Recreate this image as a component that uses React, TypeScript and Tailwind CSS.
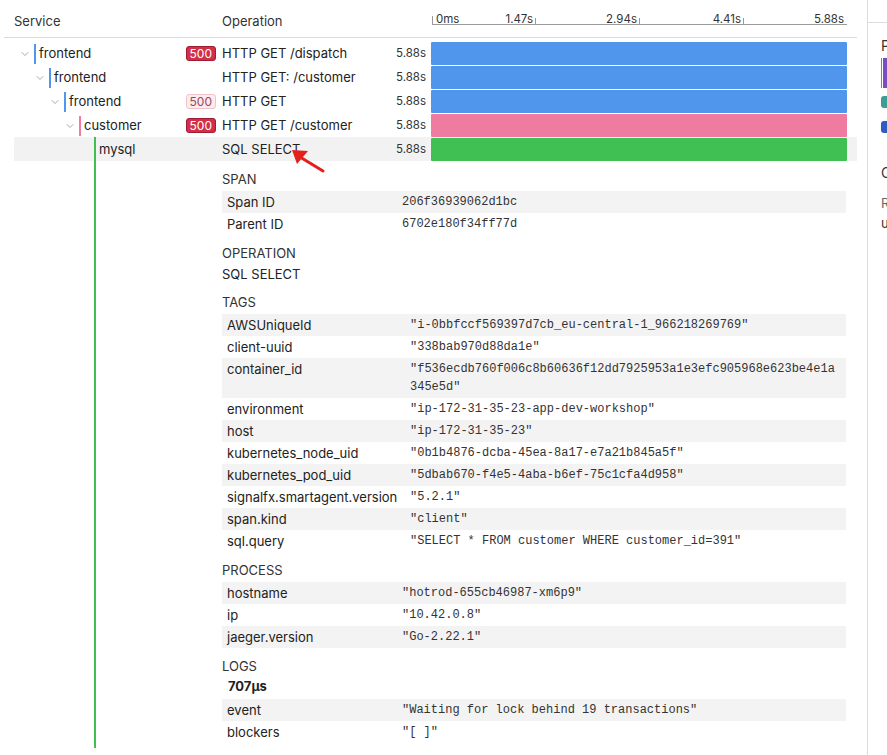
import { ChevronDown } from 'lucide-react';

type Span = {
  depth: number;
  service: string;
  color: string;
  op: string;
  badge?: 'solid' | 'light';
  open?: boolean;
};

const spans: Span[] = [
  { depth: 0, service: 'frontend', color: 'bg-[#4f96ec]', op: 'HTTP GET /dispatch', badge: 'solid', open: true },
  { depth: 1, service: 'frontend', color: 'bg-[#4f96ec]', op: 'HTTP GET: /customer', open: true },
  { depth: 2, service: 'frontend', color: 'bg-[#4f96ec]', op: 'HTTP GET', badge: 'light', open: true },
  { depth: 3, service: 'customer', color: 'bg-[#ef7ca0]', op: 'HTTP GET /customer', badge: 'solid', open: true },
  { depth: 4, service: 'mysql', color: 'bg-[#40bf52]', op: 'SQL SELECT' },
];

const pads = ['pl-[5px]', 'pl-[20px]', 'pl-[35px]', 'pl-[50px]', 'pl-[65px]'];

const ticks = [
  { label: '1.47s', x: 104 },
  { label: '2.94s', x: 208 },
  { label: '4.41s', x: 312 },
];

const spanInfo = [
  ['Span ID', '206f36939062d1bc'],
  ['Parent ID', '6702e180f34ff77d'],
];

const tags = [
  ['AWSUniqueId', '"i-0bbfccf569397d7cb_eu-central-1_966218269769"'],
  ['client-uuid', '"338bab970d88da1e"'],
  ['container_id', '"f536ecdb760f006c8b60636f12dd7925953a1e3efc905968e623be4e1a345e5d"'],
  ['environment', '"ip-172-31-35-23-app-dev-workshop"'],
  ['host', '"ip-172-31-35-23"'],
  ['kubernetes_node_uid', '"0b1b4876-dcba-45ea-8a17-e7a21b845a5f"'],
  ['kubernetes_pod_uid', '"5dbab670-f4e5-4aba-b6ef-75c1cfa4d958"'],
  ['signalfx.smartagent.version', '"5.2.1"'],
  ['span.kind', '"client"'],
  ['sql.query', '"SELECT * FROM customer WHERE customer_id=391"'],
];

const process = [
  ['hostname', '"hotrod-655cb46987-xm6p9"'],
  ['ip', '"10.42.0.8"'],
  ['jaeger.version', '"Go-2.22.1"'],
];

const logs = [
  ['event', '"Waiting for lock behind 19 transactions"'],
  ['blockers', '"[ ]"'],
];

function KeyValues({ rows, wide }: { rows: string[][]; wide?: boolean }) {
  return (
    <div className="mt-[2px]">
      {rows.map(([k, v], i) => (
        <div key={k} className={`flex ${i % 2 === 0 ? 'bg-[#f3f3f3]' : ''}`}>
          <div className={`${wide ? 'w-[188px]' : 'w-[180px]'} shrink-0 pl-[5px] py-[2px] leading-[18px] text-[13px] text-[#222]`}>
            {k}
          </div>
          <div className="flex-1 pr-[6px] py-[2px] leading-[18px] break-all font-['Liberation_Mono',monospace] text-[12px] text-[#333]">
            {v}
          </div>
        </div>
      ))}
    </div>
  );
}

function Heading({ children, className = 'mt-2' }: { children: React.ReactNode; className?: string }) {
  return <div className={`${className} leading-[20px] text-[13px] text-[#333]`}>{children}</div>;
}

export default function App() {
  return (
    <div className="flex h-[755px] w-[887px] overflow-hidden bg-white font-['Inter',sans-serif] text-[#222]">
      {/* Trace view */}
      <div className="relative w-[867px] shrink-0">
        <div className="ml-[4px] w-[853px]">
          {/* Header */}
          <div className="flex h-[38px] border-b border-[#dcdcdc] text-[13px] text-[#333]">
            <div className="w-[218px] pl-[10px] pt-[12px]">Service</div>
            <div className="w-[209px] pt-[12px]">Operation</div>
            <div className="relative w-[416px] text-[11.5px] text-[#333]">
              <div className="absolute left-[1px] right-0 top-[24px] h-px bg-[#9a9a9a]" />
              <div className="absolute left-[1px] top-[16px] h-[9px] w-px bg-[#9a9a9a]" />
              <span className="absolute left-[5px] top-[11px] leading-[16px]">0ms</span>
              {ticks.map((t) => (
                <div key={t.label}>
                  <div className="absolute top-[18px] h-[7px] w-px bg-[#9a9a9a]" style={{ left: t.x }} />
                  <span className="absolute top-[11px] leading-[16px]" style={{ right: 416 - t.x + 2 }}>
                    {t.label}
                  </span>
                </div>
              ))}
              <span className="absolute right-[3px] top-[11px] leading-[16px]">5.88s</span>
            </div>
          </div>

          {/* Span rows */}
          <div className="pl-[10px] pt-[3px]">
            {spans.map((s) => (
              <div key={s.service + s.depth} className={`flex h-6 items-center pt-px ${s.depth === 4 ? 'bg-[#f2f2f2]' : ''}`}>
                <div className={`flex h-full w-[208px] shrink-0 items-center ${pads[s.depth]}`}>
                  <div className="flex w-[12px] justify-center text-[#8c8c8c]">
                    {s.open && <ChevronDown size={12} strokeWidth={1.5} />}
                  </div>
                  <div className={`ml-[3px] w-[2px] ${s.color} ${s.depth === 4 ? 'h-[25px] -mt-px' : 'h-[20px]'}`} />
                  <span className="ml-[3px] text-[13px] text-[#222]">{s.service}</span>
                  {s.badge && (
                    <span
                      className={`ml-auto mr-[6px] rounded-[3px] border px-[3px] text-[12px] leading-[13px] ${
                        s.badge === 'solid'
                          ? 'border-[#9c1c30] bg-[#d42e48] text-white'
                          : 'border-[#f1c3cc] bg-[#fdebee] text-[#9b4759]'
                      }`}
                    >
                      500
                    </span>
                  )}
                </div>
                <div className="w-[170px] shrink-0 text-[13px] text-[#222]">{s.op}</div>
                <div className="w-[34px] shrink-0 text-right text-[11.5px] text-[#333]">5.88s</div>
                <div className="ml-[5px] -mt-px h-[24px] w-[416px] py-[0.5px]">
                  <div className={`h-full rounded-[1px] ${s.color}`} />
                </div>
              </div>
            ))}
          </div>

          {/* Span detail */}
          <div className="flex">
            <div className="w-[90px] shrink-0" />
            <div className="w-[2px] shrink-0 bg-[#40bf52]" />
            <div className="ml-[126px] w-[624px] pb-[5px]">
              <Heading className="mt-[8px]">SPAN</Heading>
              <KeyValues rows={spanInfo} />
              <Heading>OPERATION</Heading>
              <div className="leading-[22px] text-[13px] text-[#222]">SQL SELECT</div>
              <Heading className="mt-[7px]">TAGS</Heading>
              <KeyValues rows={tags} wide />
              <Heading>PROCESS</Heading>
              <KeyValues rows={process} />
              <Heading>LOGS</Heading>
              <div className="pl-[6px] leading-[21px] text-[13px] font-bold text-[#222]">707µs</div>
              <KeyValues rows={logs} />
            </div>
          </div>
        </div>

        {/* annotation arrow */}
        <svg className="absolute left-[286px] top-[144px]" width="42" height="32" viewBox="0 0 42 32">
          <line x1="37" y1="27" x2="14" y2="13" stroke="#e3201b" strokeWidth="3" strokeLinecap="round" />
          <polygon points="6,6 22,7 11,20" fill="#e3201b" />
        </svg>
      </div>

      {/* Side panel, clipped */}
      <div className="w-[20px] shrink-0 overflow-hidden border-l border-[#dcdcdc]">
        <div className="w-[200px]">
          <div className="h-[23px] border-b border-[#dcdcdc]" />
          <div className="pl-[13px] pt-[13px] text-[14px] leading-[20px] text-[#333]">Properties</div>
          <div className="ml-[13px] mt-[2px] flex h-[30px]">
            <div className="w-px bg-[#3a9e94]" />
            <div className="ml-px w-[40px] bg-[#7a4ec2]" />
          </div>
          <div className="ml-[13px] mt-[8px] h-[12px] w-[12px] rounded-[3px] bg-[#3a9e94]" />
          <div className="ml-[13px] mt-[13px] h-[12px] w-[12px] rounded-[3px] bg-[#2f5bc4]" />
          <div className="pl-[13px] pt-[30px] text-[14px] leading-[20px] text-[#333]">Config</div>
          <div className="pl-[13px] pt-[10px] text-[13px] leading-[20px] text-[#666]">Resource</div>
          <div className="pl-[13px] text-[13px] leading-[20px] text-[#333]">usage</div>
        </div>
      </div>
    </div>
  );
}
